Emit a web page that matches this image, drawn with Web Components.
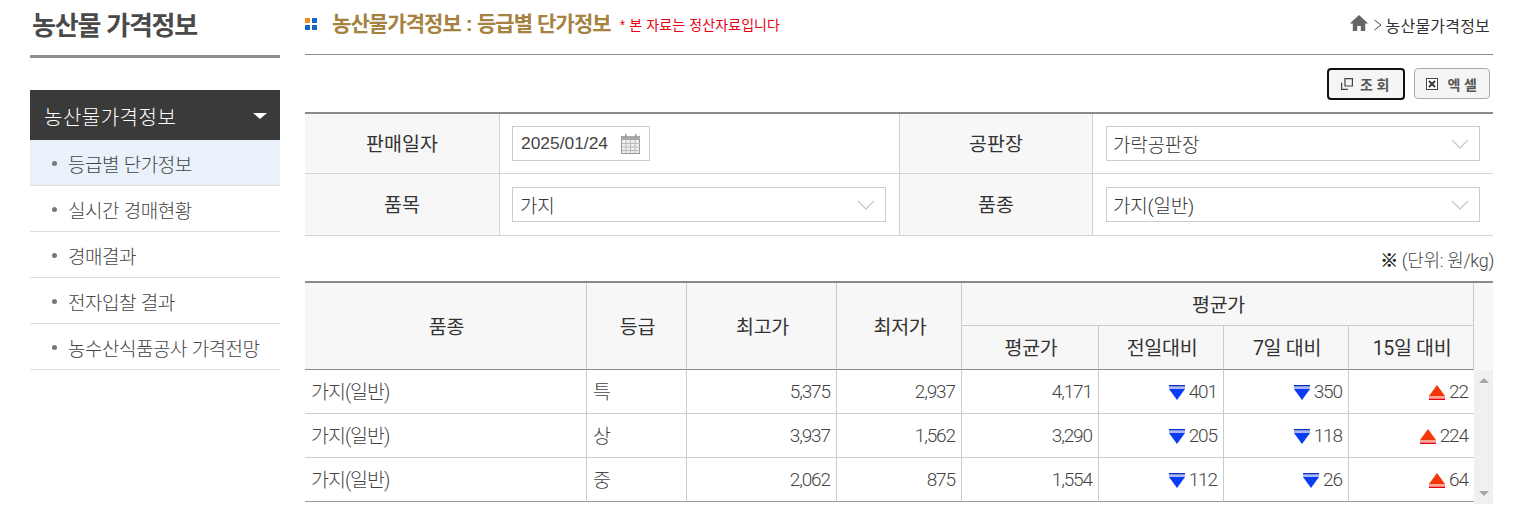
<!DOCTYPE html>
<html lang="ko">
<head>
<meta charset="utf-8">
<title>농산물 가격정보</title>
<style>
	html, body { margin: 0; padding: 0; background: #fff; }
	body { font-family: "Liberation Sans", "Noto Sans CJK KR", sans-serif; color: #333; }
	unit-note b { font-weight: 900; color: #222; text-shadow: .6px 0 #222; }
</style>
</head>
<body>
<price-page>
	<side-menu slot="side" heading="농산물 가격정보" group="농산물가격정보">
		<menu-item active>등급별 단가정보</menu-item>
		<menu-item>실시간 경매현황</menu-item>
		<menu-item>경매결과</menu-item>
		<menu-item>전자입찰 결과</menu-item>
		<menu-item>농수산식품공사 가격전망</menu-item>
	</side-menu>
	<page-head heading="농산물가격정보 : 등급별 단가정보" note="* 본 자료는 정산자료입니다" crumb="농산물가격정보"></page-head>
	<action-bar></action-bar>
	<search-form></search-form>
	<unit-note><b>※</b> (단위: 원/kg)</unit-note>
	<price-table></price-table>
</price-page>

<script>
(function() {
	const krFont = `"Liberation Sans", "Noto Sans CJK KR", sans-serif`;
	const thinFont = `Roboto, "Noto Sans CJK KR", sans-serif`;

	class PricePage extends HTMLElement {
		constructor() {
			super();
			this.attachShadow({mode: "open"}).innerHTML = `
				<style>
					:host { display: flex; width: 1526px; height: 531px; overflow: hidden; box-sizing: border-box; padding-left: 30px; gap: 25px; }
					#side { display: block; width: 250px; flex: none; }
					#main { width: 1188px; flex: none; }
				</style>
				<div id="side"><slot name="side"></slot></div>
				<div id="main"><slot></slot></div>
			`;
		}
	}

	class SideMenu extends HTMLElement {
		constructor() {
			super();
			this.attachShadow({mode: "open"}).innerHTML = `
				<style>
					:host { display: block; }
					h2 { margin: 0; box-sizing: border-box; padding: 10px 0 0 2px; font: bold 26px/33px ${krFont}; letter-spacing: -1.2px; color: #4a4a4a; border-bottom: 3px solid #8f8f8f; height: 58px; }
					#group { margin-top: 32px; height: 50px; display: flex; align-items: center; justify-content: space-between; padding: 2px 13px 0 14px; box-sizing: border-box; background: #3a3a3a; color: #fff; font-size: 20px; font-weight: 300; letter-spacing: .5px; }
					#group i { width: 0; height: 0; border: 7px solid transparent; border-top: 6px solid #fff; border-bottom: 0; }
				</style>
				<h2></h2>
				<div id="group"><span></span><i></i></div>
				<slot></slot>
			`;
			this.shadowRoot.querySelector("h2").textContent = this.getAttribute("heading");
			this.shadowRoot.querySelector("#group span").textContent = this.getAttribute("group");
		}
	}

	class MenuItem extends HTMLElement {
		constructor() {
			super();
			this.attachShadow({mode: "open"}).innerHTML = `
				<style>
					:host { display: flex; align-items: center; height: 46px; box-sizing: border-box; padding: 1px 0 0 22px; border-bottom: 1px solid #ddd; font-size: 19px; font-weight: 300; letter-spacing: -.5px; color: #444; }
					:host([active]) { background: #e9f1fb; }
					i { width: 5px; height: 5px; border-radius: 50%; background: #777; margin-right: 11px; }
				</style>
				<i></i><slot></slot>
			`;
		}
	}

	class PageHead extends HTMLElement {
		constructor() {
			super();
			this.attachShadow({mode: "open"}).innerHTML = `
				<style>
					:host { display: flex; align-items: center; height: 55px; box-sizing: border-box; padding-bottom: 6px; border-bottom: 1px solid #8a8a8a; }
					svg { flex: none; }
					h1 { margin: 0 0 0 14px; font: bold 21px/28px ${krFont}; letter-spacing: -.9px; color: #a5823f; }
					#note { margin-left: 9px; font-size: 14px; color: #e60012; letter-spacing: .1px; }
					#crumb { margin-left: auto; display: flex; align-items: center; font-size: 16px; letter-spacing: .2px; color: #333; padding: 1px 3px 0 0; }
					#crumb .home { margin: -4px 4px 0 0; }
					#crumb .sep { margin-right: 3px; }
				</style>
				<svg width="13" height="13" viewBox="0 0 13 13"><rect x="0" y="0" width="5" height="5" fill="#f08a1d"/><rect x="7" y="0" width="5" height="5" fill="#1668c4"/><rect x="0" y="7" width="5" height="5" fill="#1668c4"/><rect x="7" y="7" width="5" height="5" fill="#1668c4"/></svg>
				<h1></h1><span id="note"></span>
				<span id="crumb">
					<svg class="home" width="20" height="18" viewBox="0 0 20 18"><path d="M10 1 0.8 9.600h3V17h4.400v-5h3.600v5h4.400V9.600h3z" fill="#666"/></svg>
					<svg class="sep" width="10" height="14" viewBox="0 0 10 14"><path d="M1.500 2 8 7 1.500 12" fill="none" stroke="#444"/></svg>
					<span id="crumb-text"></span>
				</span>
			`;
			this.shadowRoot.querySelector("h1").textContent = this.getAttribute("heading");
			this.shadowRoot.querySelector("#note").textContent = this.getAttribute("note");
			this.shadowRoot.querySelector("#crumb-text").textContent = this.getAttribute("crumb");
		}
	}

	class ActionBar extends HTMLElement {
		constructor() {
			super();
			this.attachShadow({mode: "open"}).innerHTML = `
				<style>
					:host { display: flex; justify-content: flex-end; gap: 9px; height: 57px; box-sizing: border-box; padding: 13px 3px 0 0; }
					button { height: 32px; box-sizing: border-box; display: flex; align-items: center; justify-content: center; gap: 7px; padding: 0 0 0 2px; background: #f5f5f5; border: 1px solid #aaa; border-radius: 4px; font: bold 14px ${krFont}; letter-spacing: 3.5px; color: #555; }
					#go { width: 78px; border: 2px solid #111; }
					#xls { width: 76px; height: 31px; gap: 10px; }
				</style>
				<button id="go" type="button">
					<svg width="12" height="12" viewBox="0 0 12 12"><path d="M4 .6h7.400V8H4zM.6 4.600V11.400H7" fill="none" stroke="#444" stroke-width="1.200"/></svg>조회
				</button>
				<button id="xls" type="button">
					<svg width="12" height="12" viewBox="0 0 12 12"><rect x=".5" y=".5" width="11" height="11" fill="#fff" stroke="#444"/><path d="M3 3l6 6M9 3 3 9" stroke="#333" stroke-width="1.800"/></svg>엑셀
				</button>
			`;
		}
	}

	class SearchField extends HTMLElement {
		constructor() {
			super();
			this.attachShadow({mode: "open"}).innerHTML = `
				<style>
					:host { display: flex; align-items: center; justify-content: space-between; height: 35px; box-sizing: border-box; border: 1px solid #ccc; background: #fff; padding: 0 10px 0 7px; font: 300 19px ${thinFont}; letter-spacing: -.2px; color: #333; }
					svg { display: block; }
				</style>
				<span><slot></slot></span>
				<svg width="18" height="10" viewBox="0 0 18 10"><path d="M1 1l8 8 8-8" fill="none" stroke="#ccc" stroke-width="1.400"/></svg>
			`;
		}
	}

	class DateField extends HTMLElement {
		constructor() {
			super();
			this.attachShadow({mode: "open"}).innerHTML = `
				<style>
					:host { display: flex; align-items: center; justify-content: space-between; width: 138px; height: 35px; box-sizing: border-box; border: 1px solid #ccc; padding: 0 8px 0 8px; font-size: 17.400px; color: #444; }
				</style>
				<span><slot></slot></span>
				<svg width="20" height="22" viewBox="0 0 20 22"><rect x=".5" y="3.5" width="18" height="17" fill="#eee" stroke="#999"/><rect x="1" y="3" width="18" height="4" fill="#aaa"/><rect x="4" y="1" width="1.500" height="4" fill="#999"/><rect x="14" y="1" width="1.500" height="4" fill="#999"/><path d="M5 7v13M9.500 7v13M14 7v13M1 10.500h18M1 14h18M1 17.500h18" stroke="#bbb"/></svg>
			`;
		}
	}

	class SearchForm extends HTMLElement {
		constructor() {
			super();
			this.attachShadow({mode: "open"}).innerHTML = `
				<style>
					:host { display: grid; grid-template-columns: 195px 400px 193px 400px; grid-template-rows: 60px 62px; border-top: 2px solid #8a8a8a; }
					.cell { box-sizing: border-box; border-bottom: 1px solid #d5d5d5; display: flex; align-items: center; }
					.label { justify-content: center; background: #f7f7f7; border-right: 1px solid #d0d0d0; font-size: 19.500px; letter-spacing: 0; color: #333; padding-bottom: 2px; }
					.value { padding: 0 13px; border-right: 1px solid #d0d0d0; }
					.value:nth-of-type(4n+2) { padding-left: 12px; }
					.value:nth-of-type(4n) { border-right: 0; }
					.value:nth-of-type(4n) search-field { padding-left: 6px; }
					.value > * { flex: 1; }
					date-field { flex: none !important; }
				</style>
				<div class="cell label">판매일자</div>
				<div class="cell value"><date-field>2025/01/24</date-field></div>
				<div class="cell label">공판장</div>
				<div class="cell value"><search-field>가락공판장</search-field></div>
				<div class="cell label">품목</div>
				<div class="cell value"><search-field>가지</search-field></div>
				<div class="cell label">품종</div>
				<div class="cell value"><search-field>가지(일반)</search-field></div>
			`;
		}
	}

	class UnitNote extends HTMLElement {
		constructor() {
			super();
			this.attachShadow({mode: "open"}).innerHTML = `
				<style>
					:host { display: block; height: 45px; box-sizing: border-box; padding-top: 13px; margin-right: -1px; text-align: right; font: 300 18px/24px ${thinFont}; letter-spacing: -.3px; color: #444; }
				</style>
				<slot></slot>
			`;
		}
	}

	class TrendValue extends HTMLElement {
		constructor() {
			super();
			const up = this.getAttribute("dir") === "up";
			this.attachShadow({mode: "open"}).innerHTML = `
				<style>
					:host { display: inline-flex; align-items: center; gap: 4px; vertical-align: middle; }
					svg { display: block; margin-top: 3px; }
				</style>
				${up
					? `<svg width="16" height="16" viewBox="0 0 16 16"><path d="M8 0 16 11H0z" fill="#f5350a"/><rect y="11" width="16" height="2" fill="#f7a896"/><rect y="13.500" width="16" height="1.500" fill="#e8000a"/></svg>`
					: `<svg width="16" height="16" viewBox="0 0 16 16"><rect width="16" height="1.500" fill="#0a2fc0"/><rect y="2" width="16" height="2" fill="#a8b8f5"/><path d="M0 4H16L8 15z" fill="#0b3cf5"/></svg>`}
				<span><slot></slot></span>
			`;
		}
	}

	const rows = [
		["특", "5,375", "2,937", "4,171", ["down", "401"], ["down", "350"], ["up", "22"]],
		["상", "3,937", "1,562", "3,290", ["down", "205"], ["down", "118"], ["up", "224"]],
		["중", "2,062", "875", "1,554", ["down", "112"], ["down", "26"], ["up", "64"]]
	];

	class PriceTable extends HTMLElement {
		constructor() {
			super();
			const cols = `<col style="width:282px"><col style="width:100px"><col style="width:150px"><col style="width:125px"><col style="width:137px"><col style="width:125px"><col style="width:125px"><col style="width:125px">`;
			const trend = t => `<td class="num"><trend-value dir="${t[0]}">${t[1]}</trend-value></td>`;
			const body = rows.map(r => `
				<tr>
					<td>가지(일반)</td><td>${r[0]}</td>
					<td class="num">${r[1]}</td><td class="num">${r[2]}</td><td class="num">${r[3]}</td>
					${trend(r[4])}${trend(r[5])}${trend(r[6])}
				</tr>`).join("");
			this.attachShadow({mode: "open"}).innerHTML = `
				<style>
					:host { display: block; width: 1188px; border-top: 2px solid #8a8a8a; font: 300 19.500px ${thinFont}; color: #444; }
					table { border-collapse: separate; border-spacing: 0; table-layout: fixed; }
					th { background: #f7f7f7; font-weight: normal; color: #333; letter-spacing: -.3px; border-right: 1px solid #ccc; border-bottom: 1px solid #ccc; padding: 0 0 2px 2px; box-sizing: border-box; }
					#head { width: 1188px; }
					#head tr:first-child th { height: 43px; }
					#head tr:last-child th { height: 44px; border-bottom: 1px solid #8a8a8a; }
					#head th.tall { border-bottom: 1px solid #8a8a8a; }
					#head th.end { border-right: 0; border-bottom: 0; }
					#wrap { display: flex; align-items: flex-start; }
					#rows { width: 1168px; }
					td { height: 44px; line-height: 20px; box-sizing: border-box; padding: 2px 6px 0; border-right: 1px solid #ccc; border-bottom: 1px solid #ccc; letter-spacing: -1px; }
					td:last-child { border-right: 0; }
					tr:last-child td { border-bottom: 1px solid #999; }
					td.num { padding-top: 0; text-align: right; font-size: 19px; letter-spacing: -1.100px; }
					#bar { width: 20px; height: 134px; background: #f0f0f0; display: flex; flex-direction: column; justify-content: space-between; align-items: center; padding: 8px 0; box-sizing: border-box; }
					#bar i { width: 0; height: 0; border: 5px solid transparent; }
					#bar i:first-child { border-bottom: 5px solid #a5a5a5; border-top: 0; }
					#bar i:last-child { border-top: 5px solid #a5a5a5; border-bottom: 0; }
				</style>
				<table id="head">
					<colgroup>${cols}<col style="width:19px"></colgroup>
					<tr>
						<th rowspan="2" class="tall">품종</th><th rowspan="2" class="tall">등급</th><th rowspan="2" class="tall">최고가</th><th rowspan="2" class="tall">최저가</th>
						<th colspan="4">평균가</th><th rowspan="2" class="end"></th>
					</tr>
					<tr><th>평균가</th><th>전일대비</th><th>7일 대비</th><th>15일 대비</th></tr>
				</table>
				<div id="wrap">
					<table id="rows"><colgroup>${cols}</colgroup>${body}</table>
					<div id="bar"><i></i><i></i></div>
				</div>
			`;
		}
	}

	customElements.define("trend-value", TrendValue);
	customElements.define("search-field", SearchField);
	customElements.define("date-field", DateField);
	customElements.define("menu-item", MenuItem);
	customElements.define("side-menu", SideMenu);
	customElements.define("page-head", PageHead);
	customElements.define("action-bar", ActionBar);
	customElements.define("search-form", SearchForm);
	customElements.define("unit-note", UnitNote);
	customElements.define("price-table", PriceTable);
	customElements.define("price-page", PricePage);
})();
</script>
</body>
</html>
